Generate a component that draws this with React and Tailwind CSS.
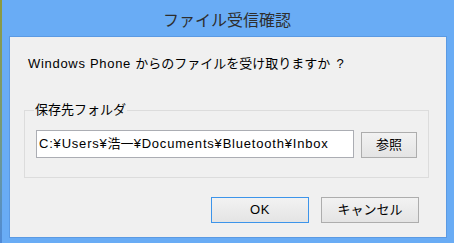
export default function App() {
  const font = { fontFamily: '"Liberation Sans", "Noto Sans CJK JP", sans-serif' };
  return (
    <div className="w-[454px] h-[243px] bg-[#69acf5] flex flex-col overflow-hidden relative" style={font}>
      <div className="absolute left-0 top-0 w-[2px] h-[243px] bg-linear-to-b from-[#8d9a3c] via-[#7a9a70] to-[#4f8ad8]" />
      <div className="h-[36px] flex items-center justify-center text-[16px] leading-[20px] text-[#2e2e2e] pt-[1px]" style={{ fontFamily: '"Noto Sans CJK JP", sans-serif' }}>
        ファイル受信確認
      </div>
      <div className="ml-[9px] w-[438px] h-[202px] border border-[#5b9ae3] bg-[#f0f0f0] flex flex-col">
        <div className="pt-[19px] pl-[18px] text-[13px] leading-[16px] text-black whitespace-nowrap">
          <span className="tracking-[0.7px]">Windows Phone </span>からのファイルを受け取りますか<span className="ml-[6px] tracking-[0.7px]">?</span>
        </div>
        <div className="relative mt-[38px] ml-[14px] mr-[17px] border border-[#dcdcdc] pt-[19px] pb-[19px] px-[11px] flex items-end gap-[7px]">
          <div className="absolute left-[9px] top-[-9px] bg-[#f0f0f0] px-[1px] text-[13px] leading-[16px] text-black">
            保存先フォルダ
          </div>
          <div className="w-[318px] h-[28px] border border-[#abadb3] bg-white flex items-center pl-[2px] text-[13px] leading-[16px] text-black whitespace-nowrap overflow-hidden">
            <span className="tracking-[0.8px]">C:¥Users¥</span>
            <span>浩一</span>
            <span className="tracking-[0.8px]">¥Documents¥Bluetooth¥Inbox</span>
          </div>
          <div className="w-[56px] h-[26px] border border-[#adadad] bg-linear-to-b from-[#f2f2f2] to-[#e4e4e4] flex items-center justify-center text-[13px] leading-[16px] text-black">
            参照
          </div>
        </div>
        <div className="mt-[19px] pr-[27px] flex justify-end gap-[12px]">
          <div className="w-[98px] h-[26px] border border-[#3c94ea] bg-linear-to-b from-[#f2f2f2] to-[#e4e4e4] flex items-center justify-center text-[13px] leading-[16px] text-black tracking-[0.7px]">
            OK
          </div>
          <div className="w-[98px] h-[26px] border border-[#adadad] bg-linear-to-b from-[#f2f2f2] to-[#e4e4e4] flex items-center justify-center text-[13px] leading-[16px] text-black">
            キャンセル
          </div>
        </div>
      </div>
    </div>
  );
}
